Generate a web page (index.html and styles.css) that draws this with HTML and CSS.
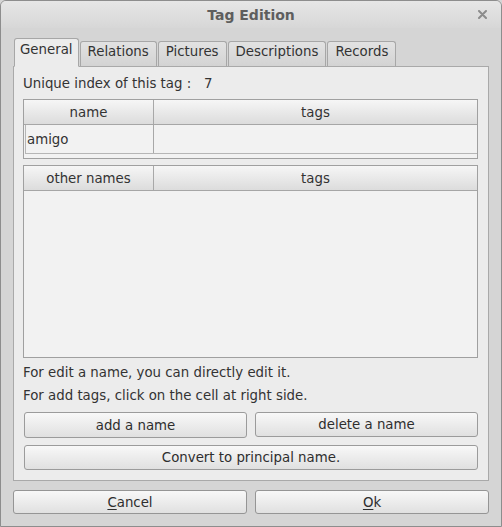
FILE: index.html
```html
<!DOCTYPE html>
<html>
<head>
<meta charset="utf-8">
<link rel="stylesheet" href="styles.css">
</head>
<body>
<div class="window">
  <div class="titlebar">
    <span class="title">Tag Edition</span>
    <svg class="close" width="9" height="9" viewBox="0 0 9 9"><path d="M1 1 L8 8 M8 1 L1 8" stroke="#8c8c8c" stroke-width="2" stroke-linecap="round"/></svg>
  </div>
  <div class="body">
    <div class="tabs">
      <div class="tab active">General</div>
      <div class="tab">Relations</div>
      <div class="tab">Pictures</div>
      <div class="tab">Descriptions</div>
      <div class="tab">Records</div>
    </div>
    <div class="pane">
      <div class="label">Unique index of this tag :&nbsp;&nbsp; 7</div>
      <div class="table table-main">
        <div class="row head">
          <div class="cell c1">name</div>
          <div class="cell c2">tags</div>
        </div>
        <div class="row data">
          <div class="cell c1 left">amigo</div>
          <div class="cell c2"></div>
        </div>
      </div>
      <div class="table table-other">
        <div class="row head">
          <div class="cell c1">other names</div>
          <div class="cell c2">tags</div>
        </div>
      </div>
      <div class="hint first">For edit a name, you can directly edit it.</div>
      <div class="hint second">For add tags, click on the cell at right side.</div>
      <div class="btnrow">
        <div class="btn tall">add a name</div>
        <div class="btn">delete a name</div>
      </div>
      <div class="btn wide">Convert to principal name.</div>
    </div>
    <div class="dialog-buttons">
      <div class="btn dlg"><u>C</u>ancel</div>
      <div class="btn dlg"><u>O</u>k</div>
    </div>
  </div>
</div>
</body>
</html>
```
FILE: styles.css
```css
html, body {
  margin: 0;
  padding: 0;
  background: #d5d5d5;
}
.window {
  width: 502px;
  height: 527px;
  box-sizing: border-box;
  border: 1px solid #8d8d8d;
  border-radius: 6px 6px 0 0;
  background: #d5d5d5;
  font-family: "DejaVu Sans", sans-serif;
  font-size: 13.33px;
  color: #333;
  overflow: hidden;
}
.titlebar {
  height: 27px;
  position: relative;
  display: flex;
  justify-content: center;
  align-items: center;
  background: linear-gradient(#e6e6e6, #d7d7d7);
}
.title {
  font-weight: bold;
  font-size: 14px;
  color: #5e5e5e;
}
.close {
  position: absolute;
  right: 14px;
  top: 9px;
}
.body {
  padding: 10px 12px 0 12px;
}
.tabs {
  display: flex;
  align-items: flex-end;
  height: 29px;
  margin-bottom: -1px;
  margin-left: 1px;
  position: relative;
  z-index: 1;
}
.tab {
  height: 25px;
  box-sizing: border-box;
  border: 1px solid #a7a7a7;
  border-bottom: none;
  border-radius: 3px 3px 0 0;
  background: linear-gradient(#e2e2e2, #d3d3d3);
  padding: 1px 7px 0 7px;
  margin-bottom: 1px;
  margin-right: 1px;
  line-height: 18px;
  color: #333;
}
.tab.active {
  height: 29px;
  margin-bottom: 0;
  margin-right: 1px;
  padding: 2px 5px 0 5px;
  background: #ececec;
  border-bottom: 1px solid #ececec;
}
.pane {
  border: 1px solid #a9a9a9;
  background: #ececec;
  padding: 8px 10px 10px 9px;
  height: 415px;
  box-sizing: border-box;
  display: flex;
  flex-direction: column;
}
.label {
  line-height: 18px;
  height: 18px;
}
.table {
  border: 1px solid #a0a0a0;
  background: #f2f2f2;
  box-sizing: border-box;
}
.table-main {
  margin-top: 6px;
  height: 60px;
}
.table-other {
  margin-top: 6px;
  height: 193px;
}
.row {
  display: flex;
}
.row.head {
  height: 25px;
  box-sizing: border-box;
  border-bottom: 1px solid #a6a6a6;
  background: linear-gradient(#f6f6f6, #dcdcdc);
}
.row.data {
  height: 29px;
  box-sizing: border-box;
  border-bottom: 1px solid #b6b6b6;
  margin-left: 1px;
}
.cell {
  display: flex;
  align-items: center;
  justify-content: center;
  box-sizing: border-box;
}
.c1 {
  width: 130px;
  border-right: 1px solid #a8a8a8;
}
.row.data .c1 {
  width: 129px;
  border-left: 1px solid #b6b6b6;
}
.c2 {
  flex: 1;
}
.cell.left {
  justify-content: flex-start;
  padding-left: 1px;
}
.hint {
  line-height: 18px;
  height: 18px;
}
.hint.first {
  margin-top: 6px;
}
.hint.second {
  margin-top: 5px;
}
.btnrow {
  display: grid;
  grid-template-columns: 1fr 1fr;
  column-gap: 8px;
  margin-top: 7px;
  padding-left: 1px;
}
.btn {
  height: 25px;
  box-sizing: border-box;
  border: 1px solid #9b9b9b;
  border-radius: 3px;
  background: linear-gradient(#f8f8f8, #e0e0e0);
  display: flex;
  align-items: center;
  justify-content: center;
  color: #2e2e2e;
}
.btn.tall {
  height: 26px;
}
.btn.wide {
  margin-top: 7px;
  margin-left: 1px;
}
.dialog-buttons {
  display: grid;
  grid-template-columns: 1fr 1fr;
  column-gap: 8px;
  margin-top: 9px;
}
.btn.dlg {
  height: 24px;
  border-color: #959595;
}
u {
  text-decoration: underline;
  text-underline-offset: 2px;
}
```
